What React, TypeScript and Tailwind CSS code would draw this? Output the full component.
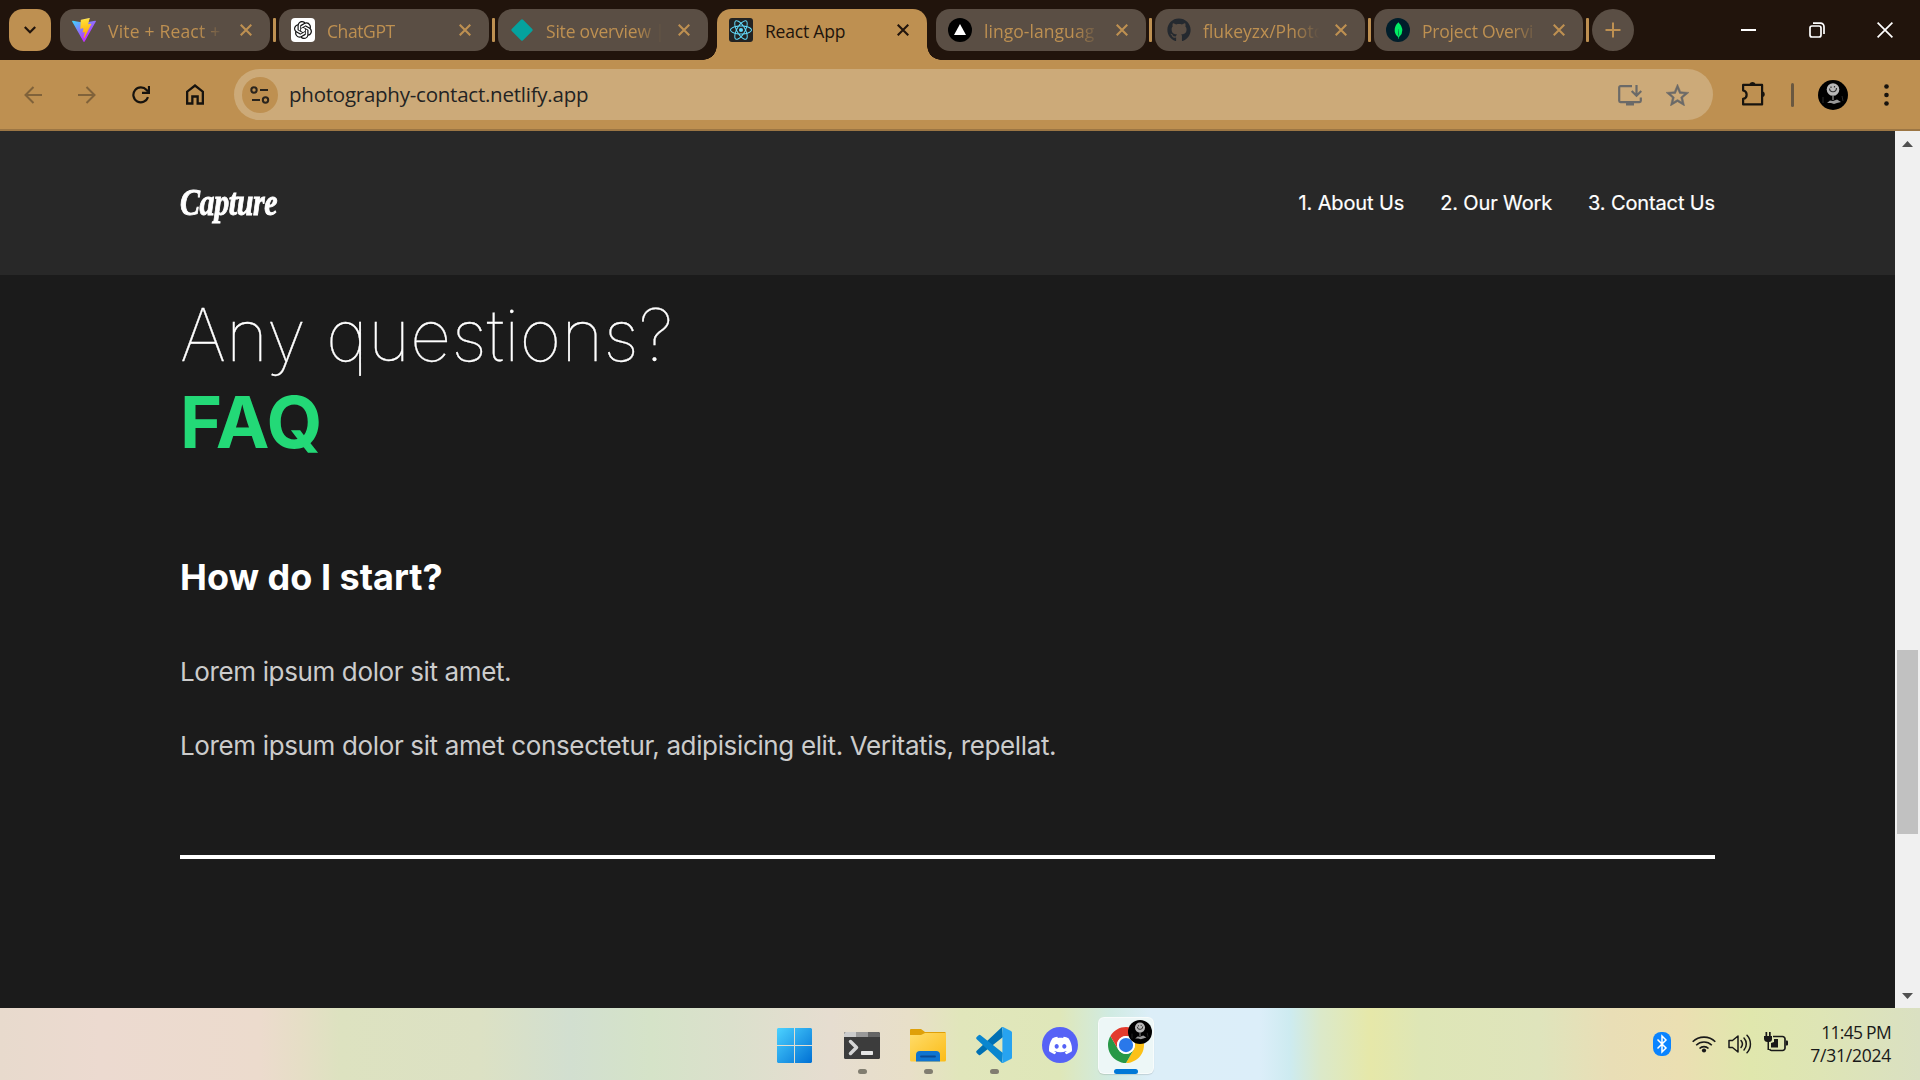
import React from "react";
import { SiReact, SiOpenai, SiMongodb, SiDiscord } from "react-icons/si";
import { FaGithub } from "react-icons/fa";

function ViteIcon() {
  return (
    <svg viewBox="0 0 256 257" className="h-6 w-6">
      <defs>
        <linearGradient id="va" x1="0%" x2="57%" y1="8%" y2="78%"><stop offset="0%" stopColor="#41D1FF" /><stop offset="100%" stopColor="#BD34FE" /></linearGradient>
        <linearGradient id="vb" x1="43%" x2="50%" y1="2%" y2="89%"><stop offset="0%" stopColor="#FFEA83" /><stop offset="9%" stopColor="#FFDD35" /><stop offset="100%" stopColor="#FFA800" /></linearGradient>
      </defs>
      <path fill="url(#va)" d="M255.153 37.938 134.897 252.976c-2.483 4.44-8.862 4.466-11.382.048L.875 37.958c-2.746-4.814 1.371-10.646 6.827-9.67l120.385 21.517a6.537 6.537 0 0 0 2.322-.004l117.867-21.483c5.438-.991 9.574 4.796 6.877 9.62Z" />
      <path fill="url(#vb)" d="M185.432.063 96.44 17.501a3.268 3.268 0 0 0-2.634 3.014l-5.474 92.456a3.268 3.268 0 0 0 3.997 3.378l24.777-5.718c2.318-.535 4.413 1.507 3.936 3.838l-7.361 36.047c-.495 2.426 1.782 4.5 4.151 3.78l15.304-4.649c2.372-.72 4.652 1.36 4.15 3.788l-11.698 56.621c-.732 3.542 3.979 5.473 5.943 2.437l1.313-2.028 72.516-144.72c1.215-2.423-.88-5.186-3.54-4.672l-25.505 4.922c-2.396.462-4.435-1.77-3.759-4.114l16.646-57.705c.677-2.35-1.37-4.583-3.769-4.113Z" />
    </svg>
  );
}

const icons: Record<string, React.ReactNode> = {
  vite: <ViteIcon />,
  gpt: <div className="flex h-6 w-6 items-center justify-center rounded-[4px] bg-white"><SiOpenai size={18} color="#111" /></div>,
  netlify: <svg viewBox="0 0 24 24" className="h-6 w-6"><rect x="4" y="4" width="16" height="16" rx="1.5" transform="rotate(45 12 12)" fill="#05a29e" /></svg>,
  react: <div className="flex h-6 w-6 items-center justify-center rounded-[3px] bg-[#222]"><SiReact size={22} color="#61dafb" /></div>,
  vercel: <svg viewBox="0 0 24 24" className="h-6 w-6"><circle cx="12" cy="12" r="12" fill="#000" /><path d="M12 6l6 11H6z" fill="#fff" /></svg>,
  github: <FaGithub size={24} color="#24292f" />,
  mongo: <div className="flex h-6 w-6 items-center justify-center rounded-full bg-[#001e2b]"><SiMongodb size={17} color="#00ed64" /></div>,
};

function Cross({ color }: { color: string }) {
  return (
    <svg viewBox="0 0 12 12" className="h-3 w-3 shrink-0" stroke={color} strokeWidth="2.1" fill="none"><path d="M.7.7l10.6 10.6M11.3.7L.7 11.3" /></svg>
  );
}

function Tab({ icon, title, active, tracking, width = "w-[210px]" }: { icon: string; title: string; active?: boolean; tracking: string; width?: string }) {
  return (
    <div className={`relative flex shrink-0 items-center pl-3 pr-[18px] ${width} ${active ? "h-[51px] rounded-t-[14px] bg-[#be9051] pb-[9px] text-[#21140c]" : "h-[42px] rounded-[14px] bg-[#5a4e44] text-[#be9051]"}`}>
      <div className="shrink-0">{icons[icon]}</div>
      <div className={`ml-3 w-[120px] whitespace-nowrap pt-[2px] text-[17.5px] leading-6 ${tracking} ${active ? "" : "[mask-image:linear-gradient(to_right,black_75%,transparent_97%)]"}`}>{title}</div>
      <div className="ml-auto"><Cross color={active ? "#21140c" : "#be9051"} /></div>
      {active && (
        <>
          <span className="absolute bottom-0 -left-[14px] h-[14px] w-[14px] bg-[radial-gradient(circle_at_0_0,transparent_13.5px,#be9051_14px)]" />
          <span className="absolute bottom-0 -right-[14px] h-[14px] w-[14px] bg-[radial-gradient(circle_at_100%_0,transparent_13.5px,#be9051_14px)]" />
        </>
      )}
    </div>
  );
}

function Sep({ show = true }: { show?: boolean }) {
  return <div className="flex h-[42px] w-[9px] shrink-0 items-center justify-center"><div className={`h-6 w-[3px] rounded-[1px] ${show ? "bg-[#be9051]" : ""}`} /></div>;
}

function TabStrip() {
  return (
    <div className="flex h-[60px] items-start bg-[#21140c] pl-[9px] pt-[9px]">
      <div className="mr-[9px] flex h-[42px] w-[42px] items-center justify-center rounded-[14px] bg-[#be9051]">
        <svg viewBox="0 0 12 8" className="h-2 w-3" fill="none" stroke="#21140c" strokeWidth="2.2"><path d="M.8 1L6 6.2 11.2 1" /></svg>
      </div>
      <Tab icon="vite" title="Vite + React +" tracking="tracking-[0.2px]" />
      <Sep />
      <Tab icon="gpt" title="ChatGPT" tracking="tracking-[-0.4px]" />
      <Sep />
      <Tab icon="netlify" title="Site overview |" tracking="tracking-[-0.2px]" />
      <Sep show={false} />
      <Tab icon="react" title="React App" active tracking="tracking-[-0.2px]" />
      <Sep show={false} />
      <Tab icon="vercel" title="lingo-languag" tracking="tracking-[0.05px]" />
      <Sep />
      <Tab icon="github" title="flukeyzx/Photo" tracking="tracking-[0px]" />
      <Sep />
      <Tab icon="mongo" title="Project Overvi" tracking="tracking-[-0.2px]" width="w-[209px]" />
      <Sep />
      <div className="flex h-[42px] w-[42px] items-center justify-center rounded-full bg-[#5a4e44]">
        <svg viewBox="0 0 16 16" className="h-4 w-4" stroke="#be9051" strokeWidth="2"><path d="M8 .5v15M.5 8h15" /></svg>
      </div>
      <div className="ml-auto mr-[27px] flex h-[42px] items-center gap-[52.5px]">
        <div className="h-[2px] w-[15px] bg-white" />
        <svg viewBox="0 0 16 16" className="h-4 w-4" fill="none" stroke="#fff" strokeWidth="1.7"><rect x="1" y="4" width="11" height="11" rx="2" /><path d="M4 1.2h7.5a3.5 3.5 0 0 1 3.5 3.5V12" /></svg>
        <svg viewBox="0 0 16 16" className="h-4 w-4" stroke="#fff" strokeWidth="1.7"><path d="M.6.6l14.8 14.8M15.4.6L.6 15.4" /></svg>
      </div>
    </div>
  );
}

function Avatar({ size }: { size: string }) {
  return (
    <svg viewBox="0 0 30 30" className={size}>
      <circle cx="15" cy="15" r="15" fill="#000" />
      <circle cx="15" cy="9.5" r="6.3" fill="#b8b8b8" />
      <path d="M11.500 8.500a3.500 3.500 0 0 0 7-.5M13 6.500v1.500M16.500 6v1.500" stroke="#333" strokeWidth="1.200" fill="none" />
      <path d="M15 16v4" stroke="#777" strokeWidth="1.500" />
      <path d="M9 23l3-2.500 3 .5 4-1.500 4 2.500-4 1-3 1-3-1z" fill="#999" />
      <path d="M5 17v6M24 16l1 5" stroke="#2a2a2a" />
    </svg>
  );
}

function Toolbar() {
  return (
    <div className="flex h-[71px] items-center border-b-2 border-[#9c7644] bg-[#be9051]">
      <div className="flex w-[234px] items-center pl-6">
        <svg viewBox="0 0 18 18" className="h-[18px] w-[18px]" fill="none" stroke="#80623a" strokeWidth="2"><path d="M18 9H1.6M9.5 1L1.5 9l8 8" /></svg>
        <svg viewBox="0 0 18 18" className="ml-9 h-[18px] w-[18px]" fill="none" stroke="#80623a" strokeWidth="2"><path d="M0 9h16.4M8.500 1l8 8-8 8" /></svg>
        <svg viewBox="0 0 18 18" className="ml-9 h-[18px] w-[18px]" fill="none" stroke="#17130e" strokeWidth="2.2"><path d="M16 11.200A7.500 7.500 0 1 1 14.600 4L16 5.600" /><path d="M17 0v6.900h-7" /></svg>
        <svg viewBox="0 0 18 21" className="ml-9 h-[21px] w-[18px]" fill="none" stroke="#17130e" strokeWidth="2.3"><path d="M1.150 19.500V7.700L9 1.500l7.850 6.200v11.800h-5.200v-7H6.350v7z" /></svg>
      </div>
      <div className="flex h-[51px] w-[1479px] items-center rounded-full bg-[#ccaa79] pl-2 pr-6">
        <div className="flex h-9 w-9 items-center justify-center rounded-full bg-[#be9051]">
          <svg viewBox="0 0 20 18" className="h-[18px] w-5" fill="none" stroke="#2a241c" strokeWidth="2"><circle cx="4" cy="4" r="2.700" /><path d="M10 4h8M2 14h8" /><circle cx="15.500" cy="14" r="2.700" /></svg>
        </div>
        <div className="ml-[11px] whitespace-nowrap text-[20.5px] tracking-[-0.24px] text-[#232323]">photography-contact.netlify.app</div>
        <svg viewBox="0 0 24 22" className="ml-auto h-[22px] w-6" fill="none" stroke="#6b6a68" strokeWidth="2.200"><path d="M14 2.100H2.500a1.300 1.300 0 0 0-1.300 1.300v13.400a1.300 1.300 0 0 0 1.300 1.300h19a1.300 1.300 0 0 0 1.300-1.300V13.500" /><path d="M18.500 1v10.500M13.700 7l4.800 4.800L23.300 7" /><path d="M8 18h8v3.500H8z" fill="#6b6a68" stroke="none" /></svg>
        <svg viewBox="2 2 20 19" className="ml-6 h-[22px] w-[23px]" fill="#6b6a68" stroke="#6b6a68" strokeWidth=".4"><path d="M22 9.240l-7.190-.620L12 2 9.190 8.630 2 9.240l5.460 4.730L5.820 21 12 17.270 18.180 21l-1.630-7.030L22 9.240zM12 15.400l-3.760 2.270 1-4.280-3.320-2.880 4.380-.380L12 6.100l1.710 4.040 4.380.380-3.320 2.880 1 4.280L12 15.400z" /></svg>
      </div>
      <svg viewBox="0 0 24 26" className="ml-[29px] -mt-[3px] h-[26px] w-6" fill="none" stroke="#17130e" strokeWidth="2.200" strokeLinejoin="round"><path d="M1.100 4.900h19v19.500h-19v-5.600a4.200 4.200 0 0 0 0-8.300z" /><path d="M7.500 4a3.200 3.200 0 0 1 6 0zM21 11.500a3 3 0 0 1 0 5.500z" fill="#17130e" stroke="none" /></svg>
      <div className="ml-[25px] h-6 w-[3px] rounded-sm bg-[#6a5840]" />
      <div className="ml-6"><Avatar size="h-[30px] w-[30px]" /></div>
      <svg viewBox="0 0 5 22" className="ml-[36px] h-[22px] w-[5px]" fill="#17130e"><circle cx="2.500" cy="2.500" r="2.300" /><circle cx="2.500" cy="11" r="2.300" /><circle cx="2.500" cy="19.500" r="2.300" /></svg>
    </div>
  );
}

function Page() {
  return (
    <div className="flex h-[877px]">
      <div className="flex w-[1895px] flex-col bg-[#1b1b1b] font-['Inter',sans-serif] text-white">
        <header className="flex h-[144px] items-center justify-between bg-[#282828] px-[180px]">
          <div className="w-[98px] origin-left scale-x-[0.81] whitespace-nowrap font-['Liberation_Serif',serif] text-[37px] font-bold italic leading-[44px] tracking-[-0.5px] [-webkit-text-stroke:0.9px_white]">Capture</div>
          <nav className="flex gap-9 text-[20px] leading-6 tracking-[-0.13px] [-webkit-text-stroke:0.2px_white]">
            <span>1. About Us</span>
            <span>2. Our Work</span>
            <span>3. Contact Us</span>
          </nav>
        </header>
        <main className="flex flex-col px-[180px] pt-[16px]">
          <h1 className="text-[72px] font-thin leading-[87px] [-webkit-text-stroke:0.3px_white]">Any questions?</h1>
          <h1 className="text-[72px] font-bold leading-[87px] text-[#23d977]">FAQ</h1>
          <h4 className="mt-[90px] text-[36px] font-bold leading-[44px]">How do I start?</h4>
          <p className="mt-[57px] text-[26px] leading-8 tracking-[-0.37px] text-[#ccc]">Lorem ipsum dolor sit amet.</p>
          <p className="mt-[42px] text-[26px] leading-8 tracking-[-0.36px] text-[#ccc]">Lorem ipsum dolor sit amet consectetur, adipisicing elit. Veritatis, repellat.</p>
          <div className="mt-[93px] h-[4px] bg-white" />
        </main>
      </div>
      <div className="flex w-[25px] flex-col items-center bg-[#f0f0f0]">
        <svg viewBox="0 0 11 6" className="mt-[10px] h-[6px] w-[11px]" fill="#505050"><path d="M5.500 0L11 6H0z" /></svg>
        <div className="mt-[503px] h-[184px] w-[21px] bg-[#c1c1c1]" />
        <svg viewBox="0 0 11 6" className="mb-[9px] mt-auto h-[6px] w-[11px]" fill="#505050"><path d="M5.500 6L11 0H0z" /></svg>
      </div>
    </div>
  );
}

function TaskItem({ children, running }: { children: React.ReactNode; running?: boolean }) {
  return (
    <div className="relative flex h-[57px] w-[66px] items-center justify-center pb-[1px]">
      {children}
      {running && <span className="absolute bottom-0 left-[29px] h-[5px] w-[9px] rounded-full bg-[#817d70]" />}
    </div>
  );
}

function Taskbar() {
  return (
    <div className="flex h-[72px] bg-[linear-gradient(90deg,#e8dacd_0px,#ecdad0_100px,#ecdbcd_260px,#e6dec6_300px,#dde2c0_340px,#dce1c4_480px,#d2dfd0_570px,#d5e3c8_650px,#dbe0cc_730px,#e6ddd0_830px,#e8dfc8_910px,#e1e6bb_960px,#dfe7b9_1060px,#d0ebe2_1110px,#dceef8_1150px,#dceef9_1260px,#cdebf0_1290px,#dbe9ca_1320px,#e6e8a9_1370px,#dee6b6_1420px,#dfe4bc_1540px,#e9deb6_1610px,#ebdfb2_1680px,#e0e7ad_1750px,#dee5b5_1820px,#dae0c2_1920px)] pt-[9px]">
      <div className="w-[761px]" />
      <TaskItem>
        <svg viewBox="0 0 35 35" className="h-[35px] w-[35px]">
          <defs><linearGradient id="win" x1="0" y1="0" x2="1" y2="1"><stop stopColor="#4cd2ff" /><stop offset="1" stopColor="#0070d4" /></linearGradient></defs>
          <path fill="url(#win)" d="M1 0h16v17H0V1zM18 0h16l1 1v16H18zM0 18h17v17H1l-1-1zM18 18h17v16l-1 1H18z" />
        </svg>
      </TaskItem>
      <div className="w-[2px]" />
      <TaskItem running>
        <svg viewBox="0 0 36 27" className="h-[27px] w-9">
          <rect width="36" height="27" rx="1.500" fill="#3c3c3c" />
          <path d="M1.500 0H12v5H0V1.500z" fill="#ccc" /><path d="M12 0h12v5H12z" fill="#999" /><path d="M24 0h10.500L36 1.500V5H24z" fill="#666" />
          <path d="M6.500 9.500l6 6-6 6" stroke="#d5d5d5" strokeWidth="3.500" fill="none" strokeLinecap="round" strokeLinejoin="round" /><rect x="17" y="19" width="12" height="4" rx=".7" fill="#e6e6e6" />
        </svg>
      </TaskItem>
      <TaskItem running>
        <svg viewBox="0 0 36 33" className="h-[33px] w-9">
          <defs><linearGradient id="fold" x1="0" y1="0" x2="1" y2="1"><stop stopColor="#ffdc6a" /><stop offset="1" stopColor="#fbbc17" /></linearGradient></defs>
          <path d="M0 1a1 1 0 0 1 1-1h10l4 3h20l1 1v8H0z" fill="#dfa009" />
          <path d="M0 6h11l4-2h21v27a1.500 1.500 0 0 1-1.500 1.500h-33A1.500 1.500 0 0 1 0 31z" fill="url(#fold)" />
          <path d="M6 32.500V26a4 4 0 0 1 4-4h16a4 4 0 0 1 4 4v6.500z" fill="#0f74d0" /><path d="M11 27.500h14" stroke="#0a4a94" strokeWidth="1.800" strokeLinecap="round" />
        </svg>
      </TaskItem>
      <TaskItem running>
        <svg viewBox="0 0 36 36" className="h-9 w-9">
          <path d="M26 0L.7 23.800a1.500 1.500 0 0 0 0 2.100l1.900 1.800a1.500 1.500 0 0 0 2 .1L27 10z" fill="#0070b3" />
          <path d="M26 36L.7 12.200a1.500 1.500 0 0 1 0-2.100l1.900-1.800a1.500 1.500 0 0 1 2-.1L27 26z" fill="#0a86cf" />
          <path d="M25.500.3Q26.300-.3 27 .1l8 3.800a1.800 1.800 0 0 1 1 1.600v25a1.800 1.800 0 0 1-1 1.600l-8 3.800q-.700.400-1.500-.200.900-.300.900-1.500V1.800Q26.400.600 25.500.300z" fill="#27a3f0" />
        </svg>
      </TaskItem>
      <TaskItem>
        <div className="flex h-9 w-9 items-center justify-center rounded-full bg-[#5662f6]"><SiDiscord size={23} color="#fff" /></div>
      </TaskItem>
      <div className="relative ml-[5px] flex h-[57px] w-[56px] items-center justify-center rounded-md border border-white/60 bg-[#edf7f7] pb-[1px] shadow-[0_1px_1px_rgba(0,0,0,0.12)]">
        <svg viewBox="0 0 48 48" className="h-9 w-9">
          <path d="M24 12h20.780A24 24 0 0 1 24 48L34.390 30A12 12 0 0 0 24 12z" fill="#fcc117" />
          <path d="M34.390 30L24 48A24 24 0 0 1 3.220 12L13.610 30A12 12 0 0 0 34.390 30z" fill="#279847" />
          <path d="M24 12H44.780A24 24 0 0 0 3.220 12L13.610 30A12 12 0 0 1 24 12z" fill="#e33b2e" />
          <circle cx="24" cy="24" r="12" fill="#fff" /><circle cx="24" cy="24" r="9.500" fill="#2a78ea" />
        </svg>
        <span className="absolute right-[1px] top-[2px]"><Avatar size="h-6 w-6" /></span>
        <span className="absolute -bottom-[1px] left-[15px] h-[5px] w-6 rounded-full bg-[#0078d7]" />
      </div>
      <div className="ml-auto flex h-[54px] items-center pr-[29px] text-[#191919]">
        <svg viewBox="0 0 18 24" className="h-6 w-[18px]"><rect width="18" height="24" rx="8" fill="#0a84ff" /><path d="M4.500 7.500l8.500 8.500-4 4V4l4 4-8.500 8.500" stroke="#fff" strokeWidth="1.500" fill="none" /></svg>
        <svg viewBox="0 0 24 18" className="ml-[21px] h-[18px] w-6" fill="none" stroke="#191919" strokeWidth="1.600"><path d="M.7 6.800a16 16 0 0 1 22.600 0M4.200 10.300a11 11 0 0 1 15.600 0M7.500 13.500a6.400 6.400 0 0 1 9 0" /><circle cx="12" cy="15.500" r="2.100" fill="#191919" stroke="none" /></svg>
        <svg viewBox="0 0 24 20" className="ml-3 h-5 w-6" fill="none" stroke="#191919" strokeWidth="1.500" strokeLinejoin="round"><path d="M1 6.500h3.500L10 2v16l-5.500-4.500H1z" /><path d="M13 6.500a5.500 5.500 0 0 1 0 7M16 4a9 9 0 0 1 0 12M19 1.200a13 13 0 0 1 0 17.600" strokeLinecap="round" /></svg>
        <svg viewBox="0 0 24 20" className="ml-3 -mt-1 h-5 w-6" fill="none" stroke="#191919" strokeWidth="1.700"><path d="M9 4.500h9.500a2.500 2.500 0 0 1 2.500 2.500v9a2.500 2.500 0 0 1-2.500 2.500H7.500A2.500 2.500 0 0 1 5.500 17" /><path d="M22 8.500h1q1 0 1 1v3q0 1-1 1h-1z" fill="#191919" stroke="none" /><path d="M0 4h8v3a3 3 0 0 1-3 3v8H3.500v-8A3.500 3.500 0 0 1 0 7zM1.500 0h1.700v4H1.500zM5 0h1.700v4H5zM7 15.500V11l3-1V7h4v8.500z" fill="#191919" stroke="none" /></svg>
        <div className="ml-[22px] w-[81px] whitespace-nowrap text-right text-[17.5px] leading-[23px]">
          <div className="tracking-[-0.7px]">11:45 PM</div>
          <div className="tracking-[-0.25px]">7/31/2024</div>
        </div>
      </div>
    </div>
  );
}

export default function App() {
  return (
    <div className="flex h-[1080px] w-[1920px] flex-col overflow-hidden font-['Open_Sans','Noto_Sans',sans-serif]">
      <TabStrip />
      <Toolbar />
      <Page />
      <Taskbar />
    </div>
  );
}
